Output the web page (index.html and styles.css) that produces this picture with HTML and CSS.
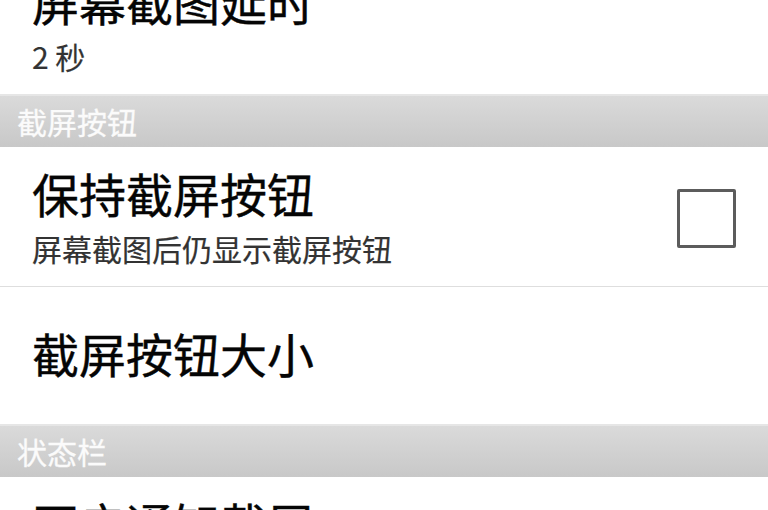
FILE: index.html
```html
<!DOCTYPE html>
<html lang="zh-CN">
<head>
<meta charset="utf-8">
<title>设置</title>
<link rel="stylesheet" href="styles.css">
</head>
<body>
<div class="prefs">
  <div class="pref pref-first">
    <div class="pref-text">
      <div class="pref-title">屏幕截图延时</div>
      <div class="pref-summary">2 秒</div>
    </div>
  </div>

  <div class="category">截屏按钮</div>

  <div class="pref pref-divided">
    <div class="pref-text">
      <div class="pref-title">保持截屏按钮</div>
      <div class="pref-summary">屏幕截图后仍显示截屏按钮</div>
    </div>
    <span class="checkbox"></span>
  </div>

  <div class="pref pref-single">
    <div class="pref-text">
      <div class="pref-title">截屏按钮大小</div>
    </div>
  </div>

  <div class="category">状态栏</div>

  <div class="pref">
    <div class="pref-text">
      <div class="pref-title">开启通知截屏</div>
      <div class="pref-summary">在通知栏中显示截屏按钮</div>
    </div>
  </div>
</div>
</body>
</html>
```

FILE: styles.css
```css
html, body {
  margin: 0;
  padding: 0;
  background: #ffffff;
  overflow: hidden;
}

body {
  width: 768px;
  height: 510px;
  font-family: "Noto Sans CJK SC", "Noto Sans", sans-serif;
}

.prefs {
  display: flex;
  flex-direction: column;
  /* list is scrolled slightly past its first item */
  margin-top: -45px;
}

.pref {
  display: flex;
  align-items: center;
  padding: 18px 32px 20px 32px;
  background: #ffffff;
}

.pref-divided {
  border-bottom: 1px solid #dedede;
}

.pref-single {
  padding-top: 38px;
  padding-bottom: 43px;
}

.pref-text {
  flex: 1;
  min-width: 0;
}

.pref-title {
  font-size: 47px;
  line-height: 56px;
  color: #050505;
  white-space: nowrap;
  -webkit-text-stroke: 0.4px #050505;
}

.pref-summary {
  margin-top: 9px;
  font-size: 30px;
  line-height: 36px;
  color: #333333;
  white-space: nowrap;
  -webkit-text-stroke: 0.2px #333333;
}

.checkbox {
  flex: none;
  box-sizing: border-box;
  width: 59px;
  height: 59px;
  margin-top: 6px;
  border: 3px solid #5c5c5c;
  border-radius: 2px;
  background: #ffffff;
}

.category {
  box-sizing: border-box;
  height: 53px;
  padding: 0 0 3px 17px;
  font-size: 30px;
  line-height: 50px;
  color: #fbfbfb;
  -webkit-text-stroke: 0.3px #fbfbfb;
  border-top: 2px solid #e6e6e6;
  background: linear-gradient(#dadada, #c8c8c8);
}
```
